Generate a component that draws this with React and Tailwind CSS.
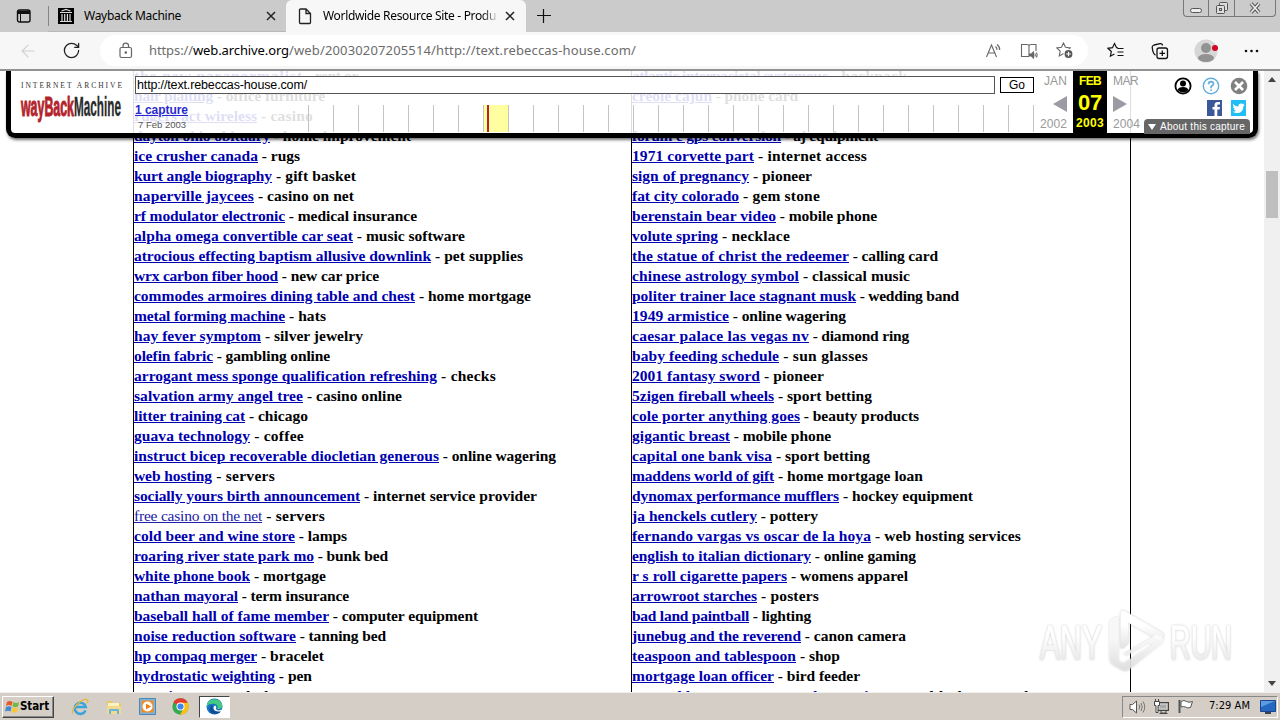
import React, { useLayoutEffect, useRef, useState } from "react";
import { Lock, RotateCw, ArrowLeft } from "lucide-react";

function Fit({ w, className = "", children }) {
  const ref = useRef(null);
  const [ls, setLs] = useState(null);
  useLayoutEffect(() => {
    const el = ref.current;
    setLs((w - el.getBoundingClientRect().width) / el.textContent.length);
  }, [w]);
  return (
    <span ref={ref} className={"inline-block whitespace-pre " + className} style={ls === null ? undefined : { letterSpacing: ls + "px" }}>
      {children}
    </span>
  );
}

const LEFT = [
  ["the new paranormalist", 303, "rent or", 358],
  ["hair plaiting", 213, "office furniture", 325],
  ["rugers act wireless", 257, "casino", 313],
  ["dayton ohio obituary", 270, "home improvement", 411],
  ["ice crusher canada", 258, "rugs", 300],
  ["kurt angle biography", 272, "gift basket", 356],
  ["naperville jaycees", 254, "casino on net", 354],
  ["rf modulator electronic", 285, "medical insurance", 417],
  ["alpha omega convertible car seat", 353, "music software", 465],
  ["atrocious effecting baptism allusive downlink", 431, "pet supplies", 523],
  ["wrx carbon fiber hood", 278, "new car price", 379],
  ["commodes armoires dining table and chest", 415, "home mortgage", 531],
  ["metal forming machine", 285, "hats", 326],
  ["hay fever symptom", 261, "silver jewelry", 363],
  ["olefin fabric", 213, "gambling online", 330],
  ["arrogant mess sponge qualification refreshing", 437, "checks", 496],
  ["salvation army angel tree", 303, "casino online", 402],
  ["litter training cat", 245, "chicago", 308],
  ["guava technology", 250, "coffee", 304],
  ["instruct bicep recoverable diocletian generous", 439, "online wagering", 556],
  ["web hosting", 212, "servers", 275],
  ["socially yours birth announcement", 360, "internet service provider", 537],
  ["free casino on the net", 262, "servers", 325, true],
  ["cold beer and wine store", 295, "lamps", 347],
  ["roaring river state park mo", 314, "bunk bed", 388],
  ["white phone book", 250, "mortgage", 326],
  ["nathan mayoral", 238, "term insurance", 349],
  ["baseball hall of fame member", 329, "computer equipment", 478],
  ["noise reduction software", 296, "tanning bed", 386],
  ["hp compaq merger", 257, "bracelet", 324],
  ["hydrostatic weighting", 275, "pen", 312],
  ["amazing europe", 236, "bed rug", 291],
];

const RIGHT = [
  ["atlantic interpacietal systemouc", 828, "backpack", 907],
  ["creole cajun", 712, "phone card", 798],
  ["", 632, "", 632],
  ["forum e gps conversion", 781, "aj equipment", 878],
  ["1971 corvette part", 754, "internet access", 867],
  ["sign of pregnancy", 749, "pioneer", 812],
  ["fat city colorado", 739, "gem stone", 820],
  ["berenstain bear video", 776, "mobile phone", 877],
  ["volute spring", 718, "necklace", 790],
  ["the statue of christ the redeemer", 849, "calling card", 938],
  ["chinese astrology symbol", 799, "classical music", 910],
  ["politer trainer lace stagnant musk", 856, "wedding band", 959],
  ["1949 armistice", 729, "online wagering", 846],
  ["caesar palace las vegas nv", 809, "diamond ring", 909],
  ["baby feeding schedule", 779, "sun glasses", 868],
  ["2001 fantasy sword", 760, "pioneer", 824],
  ["5zigen fireball wheels", 774, "sport betting", 872],
  ["cole porter anything goes", 800, "beauty products", 919],
  ["gigantic breast", 730, "mobile phone", 831],
  ["capital one bank visa", 772, "sport betting", 870],
  ["maddens world of gift", 774, "home mortgage loan", 923],
  ["dynomax performance mufflers", 839, "hockey equipment", 973],
  ["ja henckels cutlery", 757, "pottery", 818],
  ["fernando vargas vs oscar de la hoya", 871, "web hosting services", 1021],
  ["english to italian dictionary", 811, "online gaming", 916],
  ["r s roll cigarette papers", 787, "womens apparel", 908],
  ["arrowroot starches", 757, "posters", 819],
  ["bad land paintball", 749, "lighting", 811],
  ["junebug and the reverend", 801, "canon camera", 906],
  ["teaspoon and tablespoon", 796, "shop", 840],
  ["mortgage loan officer", 774, "bird feeder", 860],
  ["general bear company product review", 887, "world phone card", 1029],
];

function Column({ rows, x, className }) {
  return (
    <div className={"border-l border-black " + className}>
      {rows.map(([a, ax, b, bx, light], i) => (
        <div key={i} className="h-5 whitespace-nowrap font-['Liberation_Serif',serif] text-[15.5px] leading-5 font-bold text-black">
          {a && (
            <>
              <Fit w={ax - x} className={light ? "font-normal text-[#2020a8] underline" : "text-[#0000b0] underline"}>{a}</Fit>
              <Fit w={bx - ax}>{" - " + b}</Fit>
            </>
          )}
        </div>
      ))}
    </div>
  );
}

function X({ className }) {
  return <svg viewBox="0 0 10 10" className={className}><path d="M1 1l8 8M9 1L1 9" stroke="#222" strokeWidth="1.5" /></svg>;
}

function TabStrip() {
  return (
    <div className="flex h-8 shrink-0 bg-[#cbcbcb] font-['Noto_Sans','Open_Sans',sans-serif] text-[12px] text-black">
      <div className="flex w-12 items-center pl-4">
        <svg width="16" height="16" viewBox="0 0 16 16" fill="none" stroke="#111" strokeWidth="1.4"><rect x="1.5" y="2" width="12.5" height="12" rx="2" /><path d="M1.5 3.7h12.5M1.5 5h12.5" strokeWidth="2" /><path d="M4.5 4v10" strokeWidth="1" /></svg>
      </div>
      <div className="flex w-[238px] items-center border-b border-[#b8b8b8]">
        <div className="h-5 w-px bg-[#858585]" />
        <svg className="ml-[9px]" width="16" height="16" viewBox="0 0 16 16"><path fill="#000" d="M0 0h16v16H0z" /><path stroke="#ddd" strokeWidth="1.2" d="M2 4.5h12M2 13.5h12M4 6v7M6.7 6v7M9.4 6v7M12 6v7M3.5 3L8 1.5 12.500 3" fill="none" /></svg>
        <div className="ml-[10px]"><Fit w={97}>Wayback Machine</Fit></div>
        <X className="ml-[85px] h-[10px] w-[10px]" />
      </div>
      <div className="flex w-[240px] items-center rounded-t-md bg-[#f7f7f7]">
        <svg className="ml-3" width="14" height="17" viewBox="0 0 14 17" fill="none" stroke="#222" strokeWidth="1.3"><path d="M2.500 1H8l4.500 4.500V14.500a1 1 0 0 1-1 1h-9a1 1 0 0 1-1-1V2a1 1 0 0 1 1-1zM8 1v4.500h4.500" /></svg>
        <div className="ml-[11px] bg-gradient-to-r from-black from-90% to-[#ccc] bg-clip-text text-transparent"><Fit w={173}>Worldwide Resource Site - Produ</Fit></div>
        <X className="ml-[9px] h-[10px] w-[10px]" />
      </div>
      <svg className="mt-[9px] ml-[11px]" width="14" height="14" viewBox="0 0 14 14"><path d="M6.500 0v14M0 6.500h14" stroke="#111" strokeWidth="1.2" /></svg>
      <div className="ml-auto mr-1 flex h-[17px] w-[93px] rounded-b border border-t-0 border-[#777]">
        <div className="flex w-[25px] items-end justify-center border-r border-[#777] pb-[3px]"><div className="h-[5px] w-3 rounded-sm border border-[#555] bg-[#eee]" /></div>
        <div className="flex w-[26px] items-center justify-center border-r border-[#777]">
          <svg width="14" height="14" viewBox="0 0 14 14" fill="#ddd" stroke="#555"><rect x="4.500" y="1.500" width="8" height="8" rx="1" /><rect x="1.500" y="4.500" width="8" height="8" rx="1" /><rect x="4.500" y="7.500" width="2" height="2" /></svg>
        </div>
        <div className="flex grow items-center justify-center"><svg width="12" height="12" viewBox="0 0 12 12"><path d="M2 1.500l8 9M10 1.500l-8 9" stroke="#555" strokeWidth="3.600" /><path d="M2 1.500l8 9M10 1.500l-8 9" stroke="#eee" strokeWidth="1.600" /></svg></div>
      </div>
    </div>
  );
}

const STAR = "M7.500 1l2 4.300 4.700.6-3.400 3.300.9 4.800-4.200-2.400L3.300 14l.9-4.800L.8 5.900l4.700-.6z";

function Toolbar() {
  return (
    <div className="flex h-[39px] shrink-0 items-center border-b-2 border-[#929292] bg-[#f7f7f7] font-['Noto_Sans','Open_Sans',sans-serif]">
      <ArrowLeft className="ml-[18px] h-5 w-5 text-[#cfcfcf]" strokeWidth={1.3} />
      <RotateCw className="ml-6 h-[19px] w-[19px] text-[#222]" strokeWidth={1.6} />
      <div className="ml-[19px] flex h-[31px] w-[988px] items-center rounded-full bg-white">
        <svg className="ml-[19px]" width="14" height="17" viewBox="0 0 14 17" fill="none" stroke="#666" strokeWidth="1.2"><rect x="1" y="5.500" width="11.500" height="10" rx="1.500" /><path d="M4 5.500V4a2.800 2.800 0 0 1 5.600 0v1.500" /><circle cx="6.800" cy="10.500" r=".7" fill="#666" /></svg>
        <div className="ml-4 text-[13px] text-[#6c6c6c]"><Fit w={44}>https://</Fit><Fit w={96} className="text-black">web.archive.org</Fit><Fit w={347}>/web/20030207205514/http://text.rebeccas-house.com/</Fit></div>
        <svg className="ml-[349px]" width="18" height="18" viewBox="0 0 18 18" fill="none" stroke="#666" strokeWidth="1.100"><path d="M1.500 15L6.500 3l5 12M3.200 11h6.600M10.500 4.500q1.600 1.500 1.500 3.500M12 2.500q3 2.200 2.700 5.500" /></svg>
        <svg className="ml-[17px]" width="18" height="18" viewBox="0 0 18 18" fill="none" stroke="#666" strokeWidth="1.100"><path d="M9 14.500H1.500v-12H7q2 0 2 1.500 0-1.500 2-1.500h5V9M9 4v10" /><path d="M9.500 12h2l2-2v6l-2-2h-2z" fill="#666" /><path d="M14.800 11.500q1 1.500 0 3M16.300 10.500q1.600 2.500 0 5" /></svg>
        <svg className="ml-[18px]" width="18" height="18" viewBox="0 0 18 18" fill="none" stroke="#666" strokeWidth="1.100"><path d={STAR} /><circle cx="12.500" cy="12" r="4.500" fill="#555" stroke="#fff" /><path d="M12.500 9.700v4.600M10.200 12h4.600" stroke="#fff" /></svg>
      </div>
      <svg className="ml-[19px]" width="18" height="18" viewBox="0 0 18 18" fill="none" stroke="#111" strokeWidth="1.200"><path d="M11 6L9.600 5.700 7.500 1.500l-2 4.200-4.500.6 3.300 3.200-.9 4.700 4-2.300M10.500 6.500h6M10.500 10h6M10.500 13.500h6" /></svg>
      <svg className="ml-[26px]" width="18" height="18" viewBox="0 0 18 18" fill="none" stroke="#111" strokeWidth="1.300"><path d="M4.500 13C2.500 12.500 1.500 8 1.200 5.500 1 4 2 3.300 3 3l6-1.300c1.500-.3 2.300.5 2.600 1.800M4.500 13" /><rect x="6" y="6" width="10.500" height="10.500" rx="2" /><path d="M11.300 8.500v5.600M8.500 11.300h5.600" /></svg>
      <svg className="ml-[25px]" width="24" height="24" viewBox="0 0 24 24"><circle cx="12" cy="12" r="11.500" fill="#d6d6d6" /><circle cx="12" cy="9" r="5" fill="#929292" /><ellipse cx="12" cy="19" rx="8" ry="4" fill="#929292" /><circle cx="21" cy="9" r="3" fill="#d3041c" /></svg>
      <svg className="ml-[26px]" width="16" height="4" viewBox="0 0 16 4" fill="#111"><circle cx="2" cy="2" r="1.300" /><circle cx="7.500" cy="2" r="1.300" /><circle cx="13" cy="2" r="1.300" /></svg>
    </div>
  );
}

function ArchiveLogo() {
  return (
    <div className="w-[101px] shrink-0 pt-[10px]">
      <div className="h-[10px] font-['Liberation_Serif',serif] text-[7.500px] leading-[10px] text-[#333]"><Fit w={103} className="ml-px">INTERNET ARCHIVE</Fit></div>
      <svg className="mt-px block" width="102" height="32" viewBox="0 0 102 32" fontFamily="Liberation Sans Narrow, Liberation Sans" fontWeight="bold">
        <g transform="scale(1 1.18)">
          <text x="1" y="20" fontSize="23" fill="#b3242c" stroke="#b3242c" strokeWidth=".9" textLength="53" lengthAdjust="spacingAndGlyphs">wayBack</text>
          <text x="54" y="20" fontSize="24" fill="#2b2b2b" stroke="#2b2b2b" strokeWidth=".3" textLength="47" lengthAdjust="spacingAndGlyphs">Machine</text>
        </g>
      </svg>
    </div>
  );
}

function MonthColumn({ month, year, dir }) {
  return (
    <div className={"flex w-[34px] shrink-0 flex-col text-[12px] leading-[14px] text-[#999] " + (dir < 0 ? "items-end pr-[6px]" : "items-start pl-[6px]")}>
      <Fit w={dir < 0 ? 23 : 25} className="mt-[3px]">{month}</Fit>
      <svg className="mt-[8px]" width="14" height="16" viewBox="0 0 14 16"><path d={dir < 0 ? "M14 0v16L0 8z" : "M0 0v16l14-8z"} fill="#9b9ba3" /></svg>
      <Fit w={27} className="mt-[5px]">{year}</Fit>
    </div>
  );
}

function ArchiveBar() {
  return (
    <div className="absolute top-0 left-[6px] z-10 flex h-[67px] w-[1252px] rounded-b-[9px] border-x-[5px] border-b-[5px] border-black bg-white/[.87] pl-[9px] font-['Liberation_Sans',sans-serif] shadow-[1px_2px_3px_rgba(0,0,0,.55)]">
      <ArchiveLogo />
      <div className="ml-[14px] w-[899px] shrink-0">
        <div className="flex pt-[5px]">
          <div className="h-[18px] w-[860px] border border-[#555] bg-white pl-px text-[12.500px] leading-4 text-black"><Fit w={170}>http://text.rebeccas-house.com/</Fit></div>
          <div className="mt-px ml-[5px] h-4 w-[34px] border border-black bg-white text-center text-[12px] leading-[14px] text-black">Go</div>
        </div>
        <div className="flex h-[39px]">
          <div className="w-[173px] shrink-0 pt-[9px]">
            <div className="text-[12px] leading-[14px] font-bold text-[#2929cd]"><Fit w={53} className="underline">1 capture</Fit></div>
            <div className="mt-[2px] ml-[3px] text-[9.500px] leading-3 text-[#555]"><Fit w={48}>7 Feb 2003</Fit></div>
          </div>
          <div className="mt-[11px] flex h-[27px] shrink-0">
            {Array.from({ length: 30 }, (_, i) => (
              <div key={i} className={"shrink-0 border-l border-[#c4c4c4] " + (i === 29 ? "w-px" : "w-[25px] ") + (i === 7 ? "bg-[#ffffa0] pl-[3px]" : "")}>
                {i === 7 && <div className="h-full w-[2px] bg-[#b81f35]" />}
              </div>
            ))}
          </div>
        </div>
      </div>
      <div className="ml-[5px] flex shrink-0">
        <MonthColumn month="JAN" year="2002" dir={-1} />
        <div className="flex h-[62px] w-[34px] shrink-0 flex-col items-center bg-black font-bold text-[#ffff00]">
          <Fit w={22} className="mt-[3px] text-[12px] leading-[14px]">FEB</Fit>
          <Fit w={24} className="mt-[3px] text-[22px] leading-6">07</Fit>
          <Fit w={28} className="mt-px text-[12px] leading-[14px]">2003</Fit>
        </div>
        <MonthColumn month="MAR" year="2004" dir={1} />
      </div>
      <div className="ml-auto flex w-[109px] shrink-0 flex-col items-end">
        <div className="mt-[6px] mr-[5px] flex gap-[10px]">
          <svg width="18" height="18" viewBox="0 0 18 18"><circle cx="9" cy="9" r="7.600" fill="none" stroke="#000" strokeWidth="1.800" /><circle cx="9" cy="6.500" r="3" /><path d="M3.500 13q1-3 5.500-3t5.500 3q-5 5-11 0" /></svg>
          <svg width="18" height="18" viewBox="0 0 18 18" fill="none" stroke="#62aede" strokeWidth="1.400"><circle cx="9" cy="9" r="7.700" /><path d="M6.500 7.200q.2-2.500 2.700-2.500 2.400.1 2.300 2.200-.2 1.400-2.400 2.700v1.700M9.100 12.500v1.500" strokeWidth="1.700" /></svg>
          <svg width="18" height="18" viewBox="0 0 18 18"><circle cx="9" cy="9" r="8.300" fill="#808080" /><path d="M5 5l8 8M13 5l-8 8" stroke="#fff" strokeWidth="2.600" /></svg>
        </div>
        <div className="mt-[5px] mr-[7px] flex gap-[9px]">
          <svg width="15" height="16" viewBox="0 0 15 16"><path fill="#3b5998" d="M0 0h15v16H0z" /><path fill="#fff" d="M7.500 16V9.500h-2V7h2V5.200C7.500 3 8.800 2 10.800 2H13v2.600h-1.400c-1 0-1.300.4-1.300 1.200V7H13l-.4 2.500h-2.300V16z" /></svg>
          <svg width="15" height="16" viewBox="0 0 15 16"><path fill="#21bdf5" d="M0 0h15v16H0z" /><path fill="#fff" d="M2 4q2.300 2.500 5.400 2.600Q7.300 3.400 10 3.400q1 0 1.800.7l1.600-.5-1 1.500 1.200-.2-1.200 1.300Q12.300 13 6 13q-2.500 0-4.300-1.200 2.200 0 3.400-1-1.800-.3-2.300-1.800h1Q2 8.200 2 6.500l1 .2Q1.300 5.600 2 4" /></svg>
        </div>
        <div className="mr-[3px] mt-[3px] flex h-[15px] w-[106px] shrink-0 items-center rounded-t bg-[#666] pl-1 text-[10px] text-white">
          <svg width="8" height="6" viewBox="0 0 8 6"><path d="M0 0h8L4 6z" fill="#fff" /></svg>
          <Fit w={85} className="ml-1 leading-[17px]">About this capture</Fit>
        </div>
      </div>
    </div>
  );
}

function Watermark() {
  return (
    <svg className="absolute top-[535px] left-[1034px] z-10" width="204" height="70" viewBox="0 0 204 70" fontFamily="Liberation Sans" fontSize="49">
      <defs>
        <linearGradient id="fade" x1="0" y1="0" x2="0" y2="1"><stop offset=".4" stopColor="#fff" /><stop offset="1" stopColor="#e2e2e2" /></linearGradient>
        <filter id="glow" x="-10%" y="-20%" width="120%" height="140%"><feDropShadow dx="0" dy="0" stdDeviation="1.300" floodColor="#aaa" floodOpacity=".7" /></filter>
      </defs>
      <g filter="url(#glow)" fill="url(#fade)" stroke="url(#fade)" strokeWidth=".8">
        <text x="6" y="53" textLength="62" lengthAdjust="spacingAndGlyphs">ANY</text>
        <text x="136" y="53" textLength="62" lengthAdjust="spacingAndGlyphs">RUN</text>
        <path d="M87 42V7q0-3 3-2l38 22q3 2 1 4l-4 3-31-18v21l-4 4z" />
        <path d="M90 48l33-19 5 3q2 3-1 5L94 64q-4 2-9-2l-7-4q-2-2-2-5V17q0-3 3-4l5-2v44l5 3 30-19-4-3-22 13z" opacity=".8" />
      </g>
    </svg>
  );
}

function Taskbar() {
  return (
    <div className="flex h-7 shrink-0 items-center border-t border-[#f2f0ec] bg-[#d5cec6] font-['DejaVu_Sans_Condensed','DejaVu_Sans',sans-serif]">
      <div className="ml-[2px] flex h-[22px] w-[52px] items-center border border-t-white border-r-[#444] border-b-[#444] border-l-white pl-[2px] shadow-[inset_-1px_-1px_0_#888]">
        <svg width="15" height="15" viewBox="0 0 15 15"><path d="M2 3q3-2 5.500 0L6.500 7Q4 5 1 7z" fill="#e55a2b" /><path d="M8.500 3q3 2 5.500 0l-1 4.500q-3 1.500-5.500 0z" fill="#76b83f" /><path d="M1 8q3-1.500 5.500 0l-1 4.500Q3 11 0 12.500z" fill="#4389cf" /><path d="M7.500 8.500q3 1.500 5.500 0L12 13q-3 1.500-5.500-.5z" fill="#f8c82f" /></svg>
        <Fit w={29} className="text-[11.500px] font-bold text-black">Start</Fit>
      </div>
      <svg className="ml-[17px]" width="18" height="18" viewBox="0 0 18 18" fill="none"><path d="M14.500 12.500A5.600 5.600 0 1 1 14.800 9H5" stroke="#38a3dc" strokeWidth="2.500" /><path d="M2 15.500C-1 12 12-1 16.500 2q1 1-.5 3" stroke="#e6b73b" strokeWidth="1.300" /></svg>
      <svg className="ml-4" width="18" height="18" viewBox="0 0 18 18"><path d="M2 3h5l1 2h8v10H2z" fill="#e9c766" /><path d="M3 5h11v4H3z" fill="#fff3bd" /><path d="M2 8h14v8H2z" fill="#f3d98a" /><path d="M4 16v-4q0-1 1-1h8q1 0 1 1v4h-2v-3H6v3z" fill="#67b5dd" /></svg>
      <svg className="ml-4" width="17" height="17" viewBox="0 0 17 17"><path fill="#7cb4dc" stroke="#4b87b6" d="M.5.5h16v16H.5z" /><path fill="#f58a1f" d="M2.500 2.500h12v12h-12z" /><circle cx="8.500" cy="8.500" r="5" fill="#fff" /><path d="M7 5.500l5 3-5 3z" fill="#f27a14" /></svg>
      <svg className="ml-4" width="17" height="17" viewBox="0 0 16 16"><circle cx="8" cy="8" r="7.700" fill="#35a853" /><path d="M8 8L1.300 4.200A7.700 7.700 0 0 1 14.700 4.200z" fill="#e53a2e" /><path d="M8 4.500h6.900A7.700 7.700 0 0 1 7.500 15.700l3.500-6z" fill="#fbc116" /><circle cx="8" cy="8" r="3.800" fill="#fff" /><circle cx="8" cy="8" r="2.900" fill="#4286f4" /></svg>
      <div className="ml-[10px] flex h-[22px] w-[31px] items-center justify-center border border-t-[#444] border-r-white border-b-white border-l-[#444] bg-white">
        <svg width="17" height="17" viewBox="0 0 17 17"><circle cx="8.500" cy="8.500" r="8" fill="#1673c4" /><path d="M1 6C3 0 14-1 16.300 7c.5 3-2 4.500-5.300 4 1-1 1-4-2-5C5 5 2 6 .8 9z" fill="#43c982" /><path d="M7 7c-2 3 0 7 8 6-5 6-13 2-11-3Q5 7 7 7z" fill="#124b91" /><path d="M9 7.500q2 1 .8 3.500 2 2.500 6 .5L17 14 14 13.500Q8 14 7.500 10 7.500 8 9 7.500" fill="#fff" /></svg>
      </div>
      <div className="mr-[2px] ml-auto flex h-[22px] w-[156px] items-center border border-t-[#888] border-r-white border-b-white border-l-[#888]">
        <svg className="ml-[6px]" width="17" height="16" viewBox="0 0 17 16" fill="#fff" stroke="#555"><path d="M1 5.500h2.500L7.500 2v12l-4-3.500H1z" /><path d="M10 5.500q1.500 2.500 0 5M12 4q2.500 4 0 8M14 2.500q3.500 5.500 0 11" fill="none" stroke="#777" /></svg>
        <svg className="ml-[7px]" width="17" height="16" viewBox="0 0 17 16" stroke="#444"><rect x="4.500" y="3.500" width="11" height="8" fill="#888" /><rect x="6" y="5" width="8" height="5" fill="#aaa" stroke="#ddd" /><path d="M8 12v2h5v-2M6.500 14.500h8" fill="none" /><path d="M1.500 2.500h5v4h-1.500v7h-2v-7H1.500zM2.500 0v3M5.500 0v3" fill="#fff" /></svg>
        <svg className="ml-[7px]" width="18" height="17" viewBox="0 0 18 17" fill="#fff" stroke="#555"><path d="M2.500 2v13" strokeWidth="2" /><path d="M4 3.500q3-2 5.500 0 2 1.500 6 0l-2 6q-3 1-5-.5-2-1-4.500 0z" /></svg>
        <Fit w={41} className="ml-[14px] text-[11px] text-black">7:29 AM</Fit>
        <svg className="ml-[10px]" width="16" height="14" viewBox="0 0 16 14"><path d="M.5.5h15v11H.5z" fill="#2568c0" stroke="#1b468c" /><path d="M1 1h14L1 7z" fill="#5a9be2" /><path d="M5 12h6v2H5z" fill="#345" /></svg>
      </div>
    </div>
  );
}

export default function App() {
  return (
    <div className="flex h-[720px] w-[1280px] flex-col overflow-hidden bg-white">
      <TabStrip />
      <Toolbar />
      <div className="flex h-[621px] shrink-0 overflow-hidden">
        <div className="relative h-full w-[1264px] overflow-hidden">
          <div className="-mt-[5px] ml-[133px] flex w-[998px] border-r border-black">
            <Column rows={LEFT} x={134} className="w-[498px]" />
            <Column rows={RIGHT} x={632} className="grow" />
          </div>
          <ArchiveBar />
          <Watermark />
        </div>
        <div className="flex w-4 flex-col items-center bg-[#f0f0f0]">
          <svg className="mt-[6px]" width="8" height="5" viewBox="0 0 8 5"><path d="M0 5h8L4 0z" fill="#444" /></svg>
          <div className="mt-[89px] h-[47px] w-3 bg-[#bfbfbf]" />
          <svg className="mt-auto mb-[6px]" width="8" height="5" viewBox="0 0 8 5"><path d="M0 0h8L4 5z" fill="#444" /></svg>
        </div>
      </div>
      <Taskbar />
    </div>
  );
}
